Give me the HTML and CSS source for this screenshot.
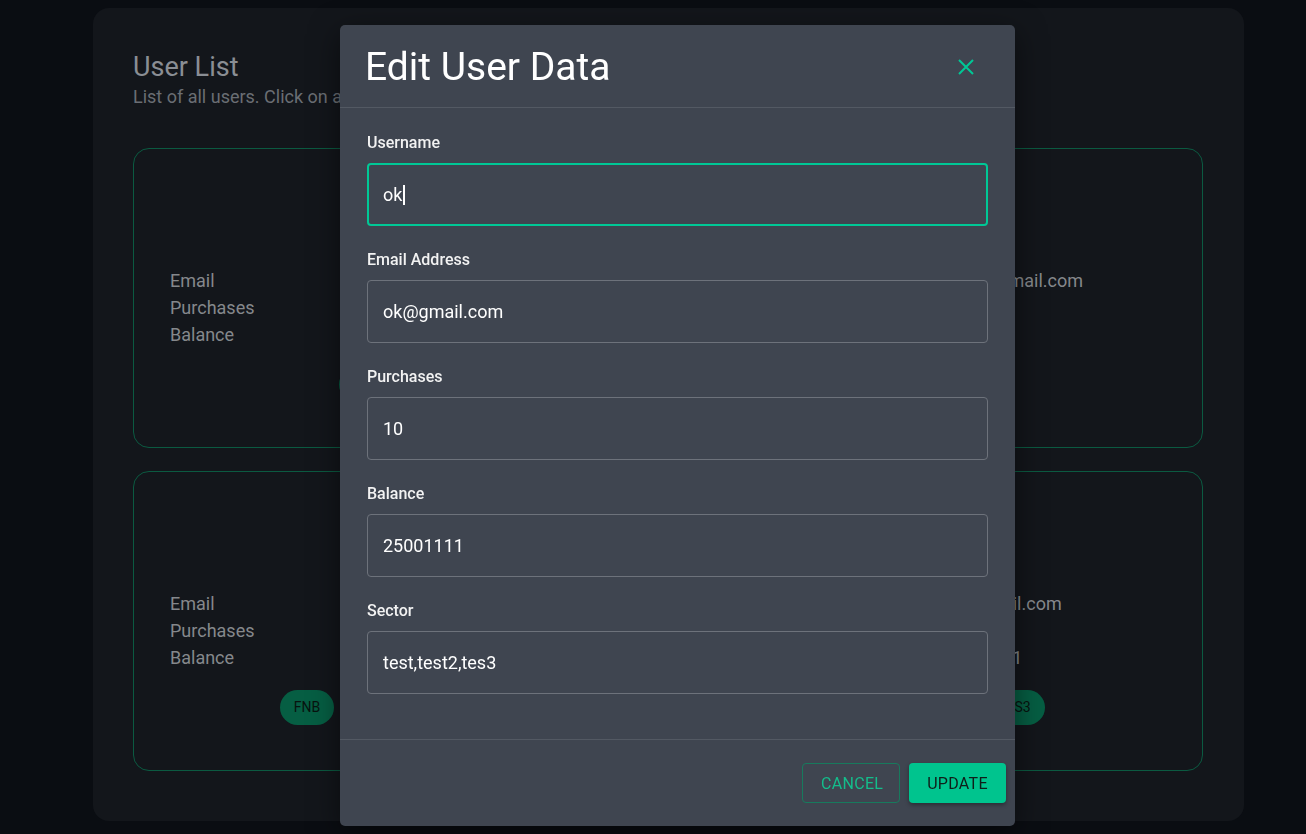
FILE: index.html
```html
<!DOCTYPE html>
<html lang="en">
<head>
<meta charset="utf-8">
<title>User List</title>
<link rel="stylesheet" href="styles.css">
</head>
<body>
<main class="panel">
  <h1 class="panel-title">User List</h1>
  <p class="panel-sub">List of all users. Click on a card to edit the user data.</p>
  <div class="grid">
    <section class="card">
      <div class="card-head"><h3>admin</h3></div>
      <div class="rows">
        <div class="row"><span>Email</span><span>admin@mail.com</span></div>
        <div class="row"><span>Purchases</span><span>4</span></div>
        <div class="row"><span>Balance</span><span>150000</span></div>
      </div>
      <div class="badges"><span class="badge">FNB</span><span class="badge">ICT</span></div>
    </section>
    <section class="card">
      <div class="card-head"><h3>test1</h3></div>
      <div class="rows">
        <div class="row"><span>Email</span><span>test1@gmail.com</span></div>
        <div class="row"><span>Purchases</span><span>2</span></div>
        <div class="row"><span>Balance</span><span>5000</span></div>
      </div>
      <div class="badges"><span class="badge">FNB</span></div>
    </section>
    <section class="card">
      <div class="card-head"><h3>budi</h3></div>
      <div class="rows">
        <div class="row"><span>Email</span><span>budi@mail.com</span></div>
        <div class="row"><span>Purchases</span><span>7</span></div>
        <div class="row"><span>Balance</span><span>320000</span></div>
      </div>
      <div class="badges"><span class="badge">FNB</span><span class="badge">RETAIL</span><span class="badge">FINANCE</span></div>
    </section>
    <section class="card">
      <div class="card-head"><h3>ok</h3></div>
      <div class="rows">
        <div class="row"><span>Email</span><span>ok@gmail.com</span></div>
        <div class="row"><span>Purchases</span><span>10</span></div>
        <div class="row"><span>Balance</span><span>25001111</span></div>
      </div>
      <div class="badges"><span class="badge">TEST</span><span class="badge">TEST2</span><span class="badge">TES3</span></div>
    </section>
  </div>
</main>

<div class="overlay">
  <div class="modal">
    <header class="modal-head">
      <h2 class="modal-title">Edit User Data</h2>
      <button class="close" type="button" aria-label="Close">
        <svg width="18" height="18" viewBox="0 0 18 18"><path d="M2 2 L16 16 M16 2 L2 16" stroke="#00c896" stroke-width="2" fill="none"/></svg>
      </button>
    </header>
    <div class="modal-body">
      <div class="field">
        <label class="label">Username</label>
        <div class="input focused">ok<span class="caret"></span></div>
      </div>
      <div class="field">
        <label class="label">Email Address</label>
        <div class="input">ok@gmail.com</div>
      </div>
      <div class="field">
        <label class="label">Purchases</label>
        <div class="input">10</div>
      </div>
      <div class="field">
        <label class="label">Balance</label>
        <div class="input">25001111</div>
      </div>
      <div class="field">
        <label class="label">Sector</label>
        <div class="input">test,test2,tes3</div>
      </div>
    </div>
    <footer class="modal-foot">
      <button class="btn btn-outline" type="button">Cancel</button>
      <button class="btn btn-solid" type="button">Update</button>
    </footer>
  </div>
</div>
</body>
</html>
```

FILE: styles.css
```css
* { box-sizing: border-box; }

html, body {
  margin: 0;
  height: 100%;
}

body {
  background: #0a0d12;
  font-family: Roboto, "Open Sans", Arial, sans-serif;
  padding: 8px 62px 0 93px;
  overflow: hidden;
}

.panel {
  background: #13161b;
  border-radius: 16px;
  padding: 43px 41px 50px 40px;
}

.panel-title {
  margin: 0;
  font-size: 27px;
  line-height: 32px;
  font-weight: 400;
  color: #8a8e94;
}

.panel-sub {
  margin: 3px 0 0;
  font-size: 18px;
  line-height: 21px;
  color: #6a6e74;
}

.grid {
  margin-top: 41px;
  display: grid;
  grid-template-columns: 1fr 1fr;
  column-gap: 24px;
  row-gap: 23px;
}

.card {
  height: 300px;
  border: 1px solid #0b5a41;
  border-radius: 16px;
  padding: 29px 36px 0;
}

.card-head {
  height: 89px;
  display: flex;
  align-items: center;
  justify-content: center;
}

.card-head h3 {
  margin: 0;
  font-size: 22px;
  font-weight: 500;
  color: #8a8e94;
}

.rows {
  display: flex;
  flex-direction: column;
}

.row {
  display: grid;
  grid-template-columns: 1fr 1fr;
  font-size: 18px;
  line-height: 27px;
  color: #85888c;
}

.badges {
  margin-top: 19px;
  display: flex;
  justify-content: center;
  gap: 8px;
}

.badge {
  height: 35px;
  line-height: 35px;
  padding: 0 14px;
  border-radius: 18px;
  background: #065e43;
  color: #08130f;
  font-size: 14px;
}

/* Modal */
.overlay {
  position: fixed;
  inset: 0;
  padding: 25px 0 0 340px;
}

.modal {
  width: 675px;
  background: #3f4550;
  border-radius: 5px;
  box-shadow: 0 8px 30px rgba(0, 0, 0, 0.5);
}

.modal-head {
  height: 83px;
  border-bottom: 1px solid #535963;
  display: flex;
  align-items: center;
  justify-content: space-between;
  padding: 2px 40px 0 25px;
}

.modal-title {
  margin: 0;
  font-size: 39px;
  font-weight: 400;
  color: #ffffff;
  line-height: 44px;
}

.close {
  background: none;
  border: 0;
  padding: 0;
  width: 18px;
  height: 18px;
  display: flex;
}

.modal-body {
  padding: 25px 27px 21px;
}

.field {
  display: flex;
  flex-direction: column;
  margin-bottom: 24px;
}

.label {
  font-size: 16px;
  line-height: 19px;
  font-weight: 500;
  color: #f2f2f2;
  margin-bottom: 11px;
}

.input {
  height: 63px;
  border: 1px solid #6d727b;
  border-radius: 4px;
  padding: 0 15px;
  display: flex;
  align-items: center;
  font-size: 18px;
  color: #ffffff;
}

.input.focused {
  border: 2px solid #00c896;
  padding: 0 14px;
}

.caret {
  display: inline-block;
  width: 2px;
  height: 20px;
  background: #ffffff;
  margin-left: 1px;
}

.modal-foot {
  border-top: 1px solid #535963;
  padding: 23px 9px 23px;
  display: flex;
  justify-content: flex-end;
  gap: 9px;
}

.btn {
  height: 40px;
  border-radius: 4px;
  font-family: Roboto, Arial, sans-serif;
  font-size: 16px;
  letter-spacing: 0.3px;
  text-transform: uppercase;
  padding: 0 18px;
  cursor: pointer;
}

.btn-outline {
  width: 98px;
  background: transparent;
  border: 1px solid #177a5d;
  color: #14bd8b;
}

.btn-solid {
  width: 97px;
  background: #00c48e;
  border: 0;
  color: #0f1f1a;
  box-shadow: 0 2px 4px rgba(0, 0, 0, 0.35);
}
```
